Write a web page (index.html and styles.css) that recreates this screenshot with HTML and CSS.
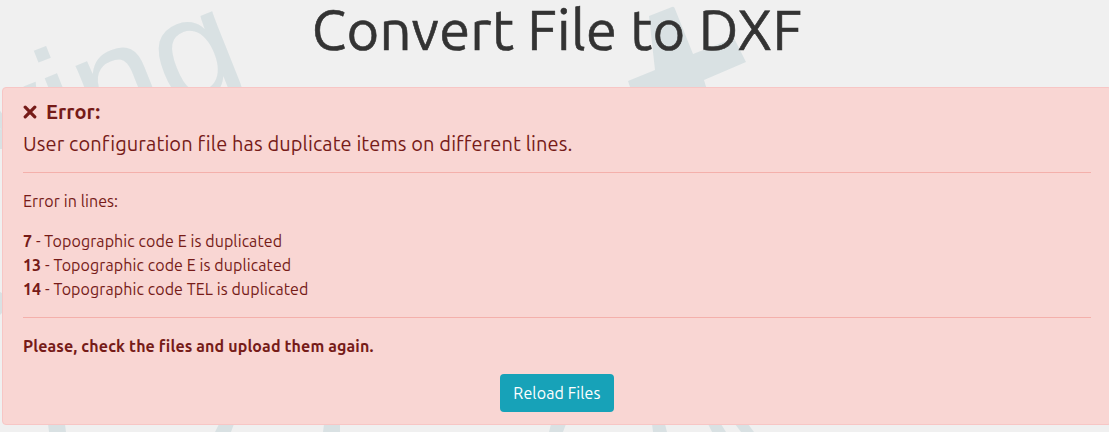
FILE: index.html
```
<!DOCTYPE html>
<html lang="en">
<head>
<meta charset="utf-8">
<title>Convert File to DXF</title>
<link rel="stylesheet" href="styles.css">
</head>
<body>
<svg class="backdrop" viewBox="0 0 1109 432" aria-hidden="true">
  <text class="backdrop-word" transform="translate(-36 195.5) rotate(-21.7)">wing</text>
  <path d="M649 16L672 7Q674 6 675 9L693 54L734 38L746 62L704 80L707 90H631L628 81L655 70Z"/>
  <path d="M0 129L2 130V149H0ZM0 292L2 293V313L0 315ZM48 424H65L66 432H49ZM219 424H234L231 432H215ZM324 424H340V432H323ZM551 424H566L563 432H549ZM652 424H665L667 432H653ZM708 424H721L726 432H712ZM735 424H748L754 432H741Z"/>
</svg>
<main class="page">
  <h1 class="title">Convert File to DXF</h1>
  <section class="alert" role="alert">
    <h2 class="alert-heading">
      <svg class="icon-times" viewBox="0 0 14 14"><path d="M2.2 2.2L11.8 11.8M11.8 2.2L2.2 11.8"/></svg>
      <span>Error:</span>
    </h2>
    <p class="summary">User configuration file has duplicate items on different lines.</p>
    <hr class="rule">
    <p class="label">Error in lines:</p>
    <ul class="lines">
      <li><b>7</b> - Topographic code E is duplicated</li>
      <li><b>13</b> - Topographic code E is duplicated</li>
      <li><b>14</b> - Topographic code TEL is duplicated</li>
    </ul>
    <hr class="rule">
    <p class="advice">Please, check the files and upload them again.</p>
    <button class="reload" type="button">Reload Files</button>
  </section>
</main>
</body>
</html>
```
FILE: styles.css
```
* { box-sizing: border-box; }
body {
  margin: 0;
  height: 432px;
  overflow: hidden;
  background: #f0f0f0;
  color: #761b18;
  font: 16px/24px Ubuntu, "Noto Sans", sans-serif;
  letter-spacing: 0.09px;
}
.backdrop {
  position: absolute;
  inset: 0;
  width: 1109px;
  height: 432px;
  fill: #d9e1e3;
}
.backdrop-word {
  font: 150px "Liberation Sans", sans-serif;
  letter-spacing: 0;
}
.page {
  position: relative;
  width: 1112px;
  padding-left: 2px;
}
.title {
  margin: 0;
  height: 87px;
  color: #333;
  font-size: 56px;
  font-weight: 400;
  line-height: 60px;
  letter-spacing: 0.3px;
  text-align: center;
  -webkit-text-stroke: 0.6px #333;
}
.alert {
  display: flex;
  flex-direction: column;
  height: 338px;
  padding: 12px 20px;
  border: 1px solid #f7c6c5;
  border-radius: 4px;
  background: #f9d6d3;
}
.alert p { margin: 0; }
.alert-heading {
  display: flex;
  align-items: center;
  gap: 9px;
  height: 24px;
  margin: 0 0 5px;
  font-size: 20px;
  font-weight: 600;
}
.icon-times {
  width: 14px;
  height: 14px;
  fill: none;
  stroke: currentColor;
  stroke-width: 3.2;
  stroke-linecap: round;
}
.summary {
  height: 27px;
  font-size: 20px;
  line-height: 29px;
  letter-spacing: 0.11px;
}
.rule {
  width: 100%;
  height: 1px;
  margin: 16px 0;
  border: 0;
  background: #f4b0ab;
}
.alert .label { margin-bottom: 16px; }
.lines {
  margin: 0;
  padding: 0;
  list-style: none;
}
.advice {
  font-weight: 700;
  letter-spacing: 0.12px;
}
.reload {
  align-self: center;
  width: 114px;
  height: 38px;
  margin: 16px 0 0;
  padding: 0;
  border: 0;
  border-radius: 4px;
  background: #17a2b8;
  color: #fff;
  font: 16px/24px Ubuntu, "Noto Sans", sans-serif;
  letter-spacing: 0.12px;
}
```
